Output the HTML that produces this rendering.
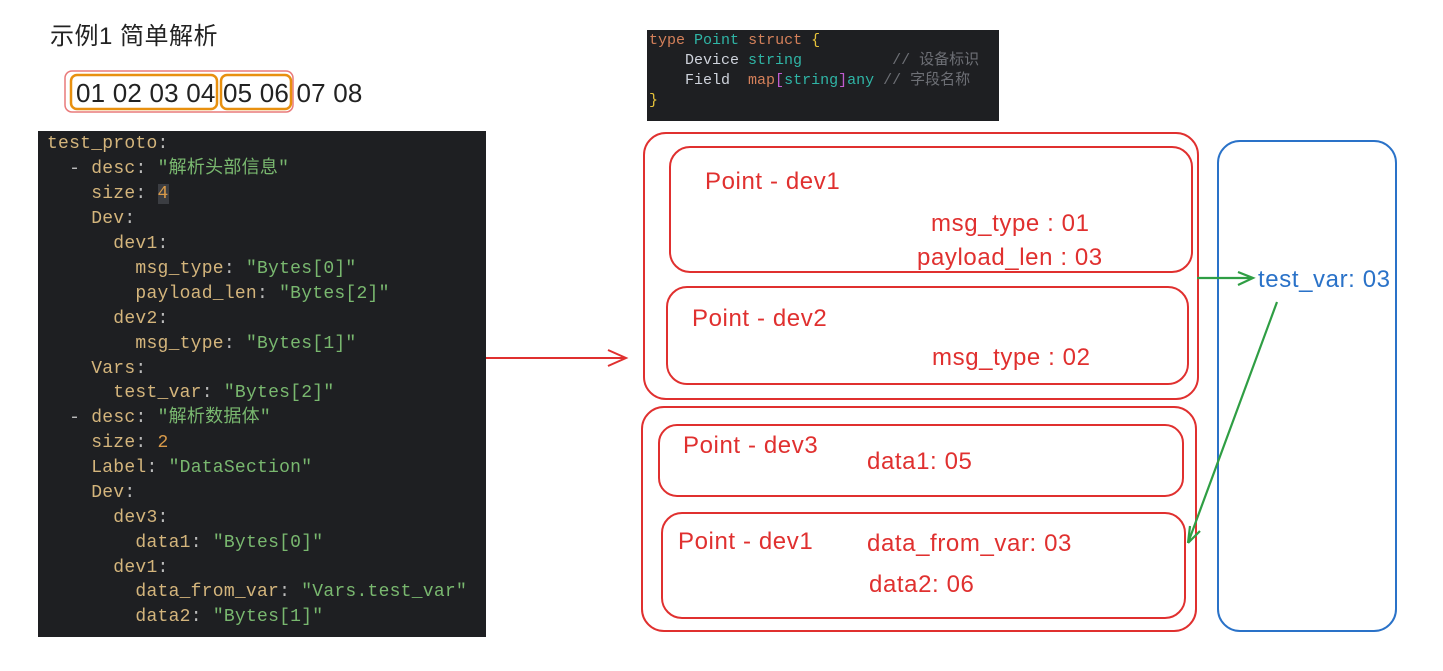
<!DOCTYPE html>
<html><head><meta charset="utf-8"><style>
body{margin:0;width:1443px;height:671px;background:#fff;position:relative;overflow:hidden;font-family:"Liberation Sans","Noto Sans CJK SC",sans-serif}
.a{position:absolute;white-space:pre}
.code{position:absolute;left:38px;top:131px;width:448px;height:506px;background:#1e1f22}
.code .l{position:absolute;left:9px;font:18px/25px "Liberation Mono","Noto Sans CJK SC",monospace;color:#d4b57c;white-space:pre;letter-spacing:0.25px}
.s{color:#79b86f}.n{color:#d89a4a}.p{color:#bbb}
.go{position:absolute;left:647px;top:30px;width:352px;height:91px;background:#1e1f22}
.go .l{position:absolute;left:2px;font:15px/20px "Liberation Mono","Noto Sans CJK SC",monospace;color:#cfd3dc;white-space:pre}
.k{color:#d5805a}.t{color:#2fb5a6}.c{color:#6d6f75}.y{color:#e7c33a}.m{color:#c05cd0}
.r{position:absolute;color:#e0302f;font-size:24px;letter-spacing:0.6px;white-space:pre}
</style></head><body>
<div class="a" style="left:50px;top:16px;font-size:24px;letter-spacing:0.5px;color:#222">示例1 简单解析</div>
<div class="a" style="left:76px;top:78px;font-size:26px;letter-spacing:0.2px;color:#222">01 02 03 04 05 06 07 08</div>
<div class="code">
<div class="l" style="top:1px">test_proto<span class="p">:</span></div>
<div class="l" style="top:26px">  <span class="p">-</span> desc<span class="p">:</span> <span class="s">"解析头部信息"</span></div>
<div class="l" style="top:51px">    size<span class="p">:</span> <span class="n" style="background:#3b3d42">4</span></div>
<div class="l" style="top:76px">    Dev<span class="p">:</span></div>
<div class="l" style="top:101px">      dev1<span class="p">:</span></div>
<div class="l" style="top:126px">        msg_type<span class="p">:</span> <span class="s">"Bytes[0]"</span></div>
<div class="l" style="top:151px">        payload_len<span class="p">:</span> <span class="s">"Bytes[2]"</span></div>
<div class="l" style="top:176px">      dev2<span class="p">:</span></div>
<div class="l" style="top:201px">        msg_type<span class="p">:</span> <span class="s">"Bytes[1]"</span></div>
<div class="l" style="top:226px">    Vars<span class="p">:</span></div>
<div class="l" style="top:250px">      test_var<span class="p">:</span> <span class="s">"Bytes[2]"</span></div>
<div class="l" style="top:275px">  <span class="p">-</span> desc<span class="p">:</span> <span class="s">"解析数据体"</span></div>
<div class="l" style="top:300px">    size<span class="p">:</span> <span class="n">2</span></div>
<div class="l" style="top:325px">    Label<span class="p">:</span> <span class="s">"DataSection"</span></div>
<div class="l" style="top:350px">    Dev<span class="p">:</span></div>
<div class="l" style="top:375px">      dev3<span class="p">:</span></div>
<div class="l" style="top:400px">        data1<span class="p">:</span> <span class="s">"Bytes[0]"</span></div>
<div class="l" style="top:425px">      dev1<span class="p">:</span></div>
<div class="l" style="top:449px">        data_from_var<span class="p">:</span> <span class="s">"Vars.test_var"</span></div>
<div class="l" style="top:474px">        data2<span class="p">:</span> <span class="s">"Bytes[1]"</span></div>
</div>
<div class="go">
<div class="l" style="top:1px"><span class="k">type</span> <span class="t">Point</span> <span class="k">struct</span> <span class="y">{</span></div>
<div class="l" style="top:21px">    Device <span class="t">string</span>          <span class="c">// 设备标识</span></div>
<div class="l" style="top:41px">    Field  <span class="k">map</span><span class="m">[</span><span class="t">string</span><span class="m">]</span><span class="t">any</span> <span class="c">// 字段名称</span></div>
<div class="l" style="top:61px"><span class="y">}</span></div>
</div>
<svg class="a" style="left:0;top:0" width="1443" height="671">
<g fill="none">
<rect x="65" y="71" width="228" height="41" rx="7" stroke="#e97a7a" stroke-width="1.5"/>
<rect x="71" y="75" width="146" height="34" rx="6" stroke="#e8900f" stroke-width="2.5"/>
<rect x="221" y="75" width="70" height="34" rx="6" stroke="#e8900f" stroke-width="2.5"/>
<g stroke="#e0302f" stroke-width="2">
<rect x="644" y="133" width="554" height="266" rx="22"/>
<rect x="670" y="147" width="522" height="125" rx="20"/>
<rect x="667" y="287" width="521" height="97" rx="20"/>
<rect x="642" y="407" width="554" height="224" rx="22"/>
<rect x="659" y="425" width="524" height="71" rx="18"/>
<rect x="662" y="513" width="523" height="105" rx="20"/>
<path d="M486 358 H626 M608 350 L626 358 L608 366"/>
</g>
<rect x="1218" y="141" width="178" height="490" rx="22" stroke="#2a72c8" stroke-width="2"/>
<g stroke="#2f9e44" stroke-width="2.2">
<path d="M1197 278 H1253 M1238 272 L1253 278 L1238 285"/>
<path d="M1277 302 L1188 543 M1188 543 L1190 526 M1188 543 L1200 531"/>
</g>
</g>
</svg>
<div class="r" style="left:705px;top:168px">Point - dev1</div>
<div class="r" style="left:931px;top:210px">msg_type : 01</div>
<div class="r" style="left:917px;top:244px">payload_len : 03</div>
<div class="r" style="left:692px;top:305px">Point - dev2</div>
<div class="r" style="left:932px;top:344px">msg_type : 02</div>
<div class="r" style="left:683px;top:432px">Point - dev3</div>
<div class="r" style="left:867px;top:448px">data1: 05</div>
<div class="r" style="left:678px;top:528px">Point - dev1</div>
<div class="r" style="left:867px;top:530px">data_from_var: 03</div>
<div class="r" style="left:869px;top:571px">data2: 06</div>
<div class="a" style="left:1258px;top:266px;font-size:24px;letter-spacing:0.6px;color:#2a72c8">test_var: 03</div>
</body></html>
